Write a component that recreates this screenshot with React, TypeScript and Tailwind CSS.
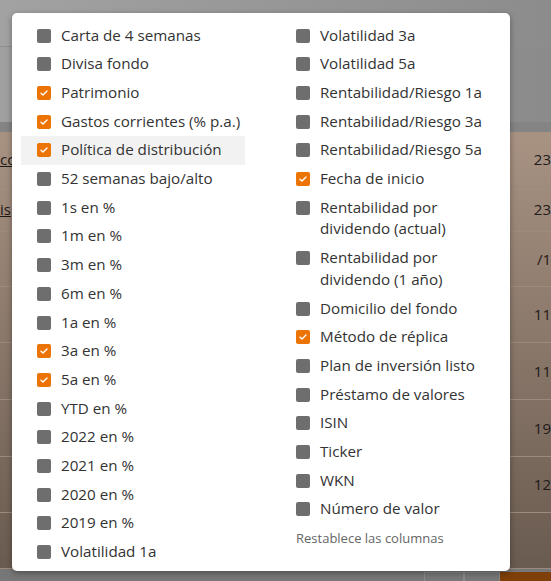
import React from 'react';

type Item = { label: string; checked?: boolean; hover?: boolean };

const leftItems: Item[] = [
  { label: 'Carta de 4 semanas' },
  { label: 'Divisa fondo' },
  { label: 'Patrimonio', checked: true },
  { label: 'Gastos corrientes (% p.a.)', checked: true },
  { label: 'Política de distribución', checked: true, hover: true },
  { label: '52 semanas bajo/alto' },
  { label: '1s en %' },
  { label: '1m en %' },
  { label: '3m en %' },
  { label: '6m en %' },
  { label: '1a en %' },
  { label: '3a en %', checked: true },
  { label: '5a en %', checked: true },
  { label: 'YTD en %' },
  { label: '2022 en %' },
  { label: '2021 en %' },
  { label: '2020 en %' },
  { label: '2019 en %' },
  { label: 'Volatilidad 1a' },
];

const rightItems: Item[] = [
  { label: 'Volatilidad 3a' },
  { label: 'Volatilidad 5a' },
  { label: 'Rentabilidad/Riesgo 1a' },
  { label: 'Rentabilidad/Riesgo 3a' },
  { label: 'Rentabilidad/Riesgo 5a' },
  { label: 'Fecha de inicio', checked: true },
  { label: 'Rentabilidad por dividendo (actual)' },
  { label: 'Rentabilidad por dividendo (1 año)' },
  { label: 'Domicilio del fondo' },
  { label: 'Método de réplica', checked: true },
  { label: 'Plan de inversión listo' },
  { label: 'Préstamo de valores' },
  { label: 'ISIN' },
  { label: 'Ticker' },
  { label: 'WKN' },
  { label: 'Número de valor' },
];

const bgRows = [
  { h: 'h-[55px]', left: 'cc', right: '23' },
  { h: 'h-[45px]', left: 'is', right: '23' },
  { h: 'h-[55px]', left: '', right: '/1' },
  { h: 'h-[56px]', left: '', right: '11' },
  { h: 'h-[57px]', left: '', right: '11' },
  { h: 'h-[57px]', left: '', right: '19' },
  { h: 'h-[56px]', left: '', right: '12' },
  { h: 'h-[56px]', left: '', right: '' },
];

const Checkbox = ({ checked }: { checked?: boolean }) =>
  checked ? (
    <span className="mt-[4px] flex h-[14px] w-[14px] shrink-0 items-center justify-center rounded-[2px] bg-[#ec7404]">
      <svg width="8" height="6" viewBox="0 0 8 6" fill="none">
        <path d="M1 3.2 L3 5 L7 1" stroke="white" strokeWidth="1.4" strokeLinecap="round" strokeLinejoin="round" />
      </svg>
    </span>
  ) : (
    <span className="mt-[4px] h-[14px] w-[14px] shrink-0 rounded-[2px] bg-[#6e6e6e]" />
  );

const Row = ({ item, nowrap }: { item: Item; nowrap?: boolean }) => (
  <div className={`flex items-start gap-[10px] py-[3.5px] pl-4 leading-[21.7px] ${item.hover ? 'bg-[#f2f2f2]' : ''}`}>
    <Checkbox checked={item.checked} />
    <span className={nowrap ? 'whitespace-nowrap' : ''}>{item.label}</span>
  </div>
);

export default function App() {
  return (
    <div
      className="relative h-[581px] w-[551px] overflow-hidden"
      style={{ fontFamily: '"Open Sans", "Noto Sans", sans-serif' }}
    >
      {/* dimmed page behind */}
      <div className="absolute inset-0 flex flex-col text-[15px] text-[#1e1a17]">
        <div className="h-[47px] border-b border-[#8f8f8f] bg-gradient-to-r from-[#a2a2a2] to-[#8c8c8c]" />
        <div className="h-[75px] bg-gradient-to-r from-[#a0a0a0] to-[#8b8b8b]" />
        <div className="h-[10px] bg-[#848484]" />
        <div className="flex flex-col bg-gradient-to-b from-[#a89383] to-[#6a5b50]">
          {bgRows.map((r, i) => (
            <div key={i} className={`${r.h} flex items-center justify-between border-b border-[#9c8a7d]`}>
              <span className="underline">{r.left}</span>
              <span>{r.right}</span>
            </div>
          ))}
        </div>
        <div className="flex flex-1 justify-end bg-[#777777]">
          <div className="mt-[3px] w-[40px] border border-b-0 border-[#8a8a8a]" />
          <div className="mt-[3px] w-[36px] border border-b-0 border-[#8a8a8a]" />
          <div className="mt-[3px] w-[51px] bg-[#7e3f08]" />
        </div>
      </div>

      {/* column chooser popup */}
      <div className="relative ml-[12px] mt-[13px] w-[498px] rounded-[5px] bg-white pb-[5px] pl-[9px] pt-[8px] text-[15.2px] text-[#333333] shadow-[0_2px_6px_rgba(0,0,0,0.35)]">
        <div className="grid grid-cols-[224px_224px] gap-x-[35px]">
          <div className="flex flex-col">
            {leftItems.map((it) => (
              <Row key={it.label} item={it} nowrap />
            ))}
          </div>
          <div className="flex flex-col">
            {rightItems.map((it) => (
              <Row key={it.label} item={it} />
            ))}
            <div className="mt-[4px] pl-4 text-[13px] leading-[20px] text-[#666666]">Restablece las columnas</div>
          </div>
        </div>
      </div>
    </div>
  );
}
